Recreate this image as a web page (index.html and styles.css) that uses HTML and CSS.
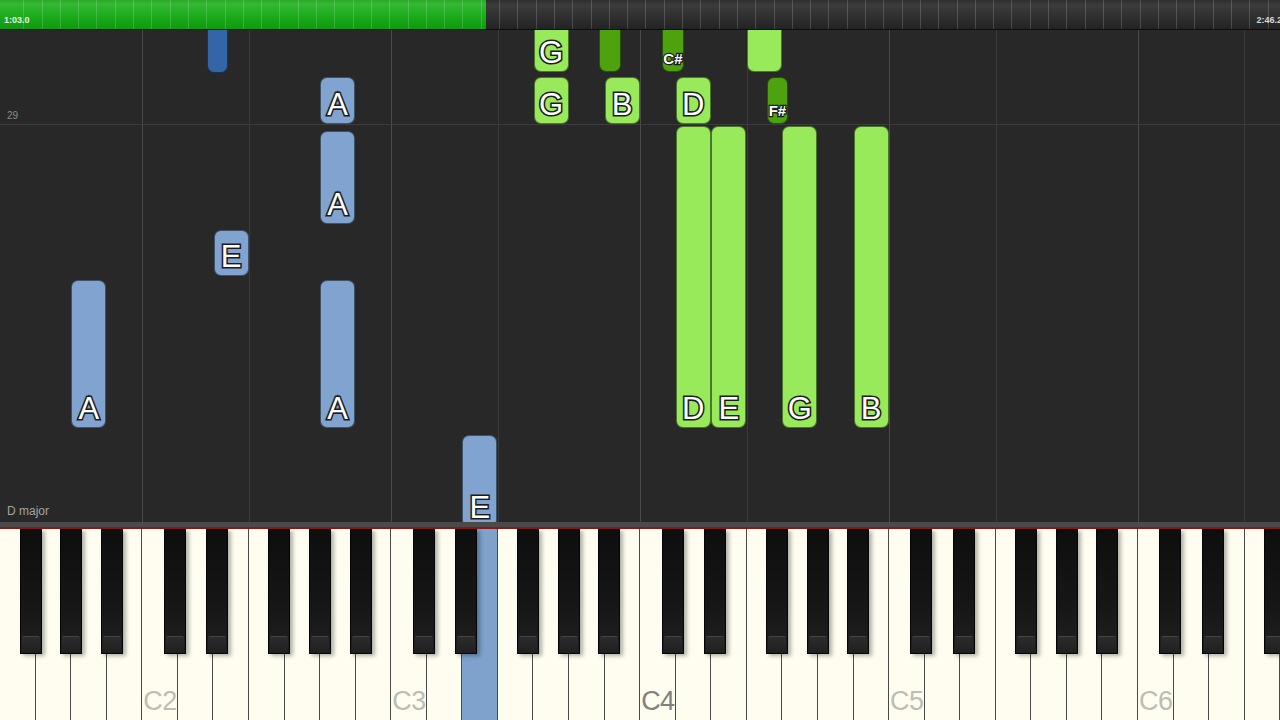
FILE: index.html
```html
<!DOCTYPE html>
<html lang="en">
<head>
<meta charset="utf-8">
<title>Piano roll</title>
<link rel="stylesheet" href="styles.css">
</head>
<body>
<div class="app">
  <div class="timebar">
    <div class="progress"><span class="time">1:03.0</span></div>
    <div class="remaining"><span class="time time-end">2:46.2</span></div>
  </div>

  <div class="roll">
    <div class="vline vline-c" style="left:142px"></div>
    <div class="vline vline-f" style="left:249px"></div>
    <div class="vline vline-c" style="left:391px"></div>
    <div class="vline vline-f" style="left:498px"></div>
    <div class="vline vline-c" style="left:640px"></div>
    <div class="vline vline-f" style="left:747px"></div>
    <div class="vline vline-c" style="left:889px"></div>
    <div class="vline vline-f" style="left:996px"></div>
    <div class="vline vline-c" style="left:1138px"></div>
    <div class="vline vline-f" style="left:1244px"></div>
    <div class="hline" style="top:94px"></div>
    <span class="measure" style="top:81px">29</span>

    <!-- left hand (blue) -->
    <div class="note note-lh-black" style="left:206.5px;top:-10px;height:52.5px"></div>
    <div class="note note-lh" style="left:320.2px;top:47px;height:47px"><span class="lbl">A</span></div>
    <div class="note note-lh" style="left:320.2px;top:101px;height:93px"><span class="lbl">A</span></div>
    <div class="note note-lh" style="left:213.5px;top:200px;height:46px"><span class="lbl">E</span></div>
    <div class="note note-lh" style="left:71.3px;top:250px;height:148px"><span class="lbl">A</span></div>
    <div class="note note-lh" style="left:320.2px;top:250px;height:148px"><span class="lbl">A</span></div>
    <div class="note note-lh" style="left:462.4px;top:405px;height:92px"><span class="lbl">E</span></div>

    <!-- right hand (green) -->
    <div class="note note-rh" style="left:533.5px;top:-10px;height:52px"><span class="lbl">G</span></div>
    <div class="note note-rh-black" style="left:599px;top:-10px;height:52px"></div>
    <div class="note note-rh-black" style="left:662.2px;top:-10px;height:52px"><span class="lbl lbl-small">C#</span></div>
    <div class="note note-rh" style="left:746.9px;top:-10px;height:52px"></div>
    <div class="note note-rh" style="left:533.5px;top:47px;height:47px"><span class="lbl">G</span></div>
    <div class="note note-rh" style="left:604.6px;top:47px;height:47px"><span class="lbl">B</span></div>
    <div class="note note-rh" style="left:675.8px;top:47px;height:47px"><span class="lbl">D</span></div>
    <div class="note note-rh-black" style="left:766.7px;top:47px;height:47px"><span class="lbl lbl-small">F#</span></div>
    <div class="note note-rh" style="left:675.8px;top:96px;height:302px"><span class="lbl">D</span></div>
    <div class="note note-rh" style="left:711.3px;top:96px;height:302px"><span class="lbl">E</span></div>
    <div class="note note-rh" style="left:782.4px;top:96px;height:302px"><span class="lbl">G</span></div>
    <div class="note note-rh" style="left:853.5px;top:96px;height:302px"><span class="lbl">B</span></div>

    <span class="key-name">D major</span>
  </div>

  <div class="rail"></div>

  <div class="keyboard">
    <div class="wk"></div>
    <div class="wk"></div>
    <div class="wk"></div>
    <div class="wk"></div>
    <div class="wk"><span class="oct">C2</span></div>
    <div class="wk"></div>
    <div class="wk"></div>
    <div class="wk"></div>
    <div class="wk"></div>
    <div class="wk"></div>
    <div class="wk"></div>
    <div class="wk"><span class="oct">C3</span></div>
    <div class="wk"></div>
    <div class="wk wk-lit"></div>
    <div class="wk"></div>
    <div class="wk"></div>
    <div class="wk"></div>
    <div class="wk"></div>
    <div class="wk"><span class="oct oct-mid">C4</span></div>
    <div class="wk"></div>
    <div class="wk"></div>
    <div class="wk"></div>
    <div class="wk"></div>
    <div class="wk"></div>
    <div class="wk"></div>
    <div class="wk"><span class="oct">C5</span></div>
    <div class="wk"></div>
    <div class="wk"></div>
    <div class="wk"></div>
    <div class="wk"></div>
    <div class="wk"></div>
    <div class="wk"></div>
    <div class="wk"><span class="oct">C6</span></div>
    <div class="wk"></div>
    <div class="wk"></div>
    <div class="wk"></div>

    <div class="bk" style="left:19.6px"></div>
    <div class="bk" style="left:60.1px"></div>
    <div class="bk" style="left:100.7px"></div>
    <div class="bk" style="left:163.8px"></div>
    <div class="bk" style="left:206.3px"></div>
    <div class="bk" style="left:268.4px"></div>
    <div class="bk" style="left:309px"></div>
    <div class="bk" style="left:349.6px"></div>
    <div class="bk" style="left:412.7px"></div>
    <div class="bk" style="left:455.2px"></div>
    <div class="bk" style="left:517.3px"></div>
    <div class="bk" style="left:557.9px"></div>
    <div class="bk" style="left:598.4px"></div>
    <div class="bk" style="left:661.6px"></div>
    <div class="bk" style="left:704.1px"></div>
    <div class="bk" style="left:766.2px"></div>
    <div class="bk" style="left:806.8px"></div>
    <div class="bk" style="left:847.3px"></div>
    <div class="bk" style="left:910.4px"></div>
    <div class="bk" style="left:953px"></div>
    <div class="bk" style="left:1015.1px"></div>
    <div class="bk" style="left:1055.7px"></div>
    <div class="bk" style="left:1096.2px"></div>
    <div class="bk" style="left:1159.3px"></div>
    <div class="bk" style="left:1201.9px"></div>
    <div class="bk" style="left:1264px"></div>
  </div>
</div>
</body>
</html>
```

FILE: styles.css
```css
* { box-sizing: border-box; }

html, body {
  margin: 0;
  padding: 0;
  width: 1280px;
  height: 720px;
  overflow: hidden;
  background: #282828;
  font-family: "Liberation Sans", Arial, sans-serif;
}

.app {
  display: flex;
  flex-direction: column;
  width: 1280px;
  height: 720px;
}

/* ---------- time bar ---------- */
.timebar {
  position: relative;
  display: flex;
  height: 30px;
  flex: none;
  border-bottom: 1px solid #0c0c0c;
}
.timebar::after {
  content: "";
  position: absolute;
  inset: 0 0 0 0;
  background: repeating-linear-gradient(to right,
    transparent 0 17.3px,
    rgba(255, 255, 255, 0.16) 17.3px 18.3px);
  background-position: 6px 0;
  pointer-events: none;
}
.progress {
  width: 486px;
  display: flex;
  align-items: flex-end;
  padding: 0 0 4px 4px;
  background: linear-gradient(to bottom, #2aa82a 0, #33b933 4px, #20ad20 14px, #0e9d0e 28px);
}
.remaining {
  flex: 1;
  display: flex;
  align-items: flex-end;
  justify-content: flex-end;
  padding: 0 0 4px 0;
  background: linear-gradient(to bottom, #2e2e2e 0, #3c3c3c 5px, #323232 14px, #242424 28px);
}
.time {
  position: relative;
  z-index: 1;
  font-size: 9px;
  font-weight: bold;
  color: #e8f0e8;
  line-height: 1;
}
.time-end {
  margin-right: -2px;
  color: #d8d8d8;
}

/* ---------- falling notes area ---------- */
.roll {
  position: relative;
  height: 492px;
  flex: none;
  overflow: hidden;
  background: #282828;
}
.vline {
  position: absolute;
  top: 0;
  bottom: 0;
  width: 1px;
}
.vline-c { background: #4b4b4b; }
.vline-f { background: #3a3a3a; }
.hline {
  position: absolute;
  left: 0;
  right: 0;
  height: 1px;
  background: #3d3d3d;
}
.measure {
  position: absolute;
  left: 7px;
  font-size: 10px;
  color: #8a8a8a;
  line-height: 1;
}
.key-name {
  position: absolute;
  left: 7px;
  bottom: 5px;
  font-size: 12px;
  color: #a4a4a4;
  line-height: 1;
}

.note {
  position: absolute;
  width: 35px;
  border-radius: 7px;
  border: 1px solid rgba(0, 0, 0, 0.5);
  display: flex;
  align-items: flex-end;
  justify-content: center;
  padding-bottom: 3px;
  overflow: visible;
}
.note-lh { background: #80a4cf; }
.note-lh-black { background: #3565a9; width: 21.5px; }
.note-rh { background: #99ea5b; }
.note-rh-black { background: #4da20e; width: 21.5px; padding-bottom: 5px; }

.lbl {
  font-size: 31px;
  line-height: 1;
  color: #ffffff;
  -webkit-text-stroke: 3.2px #1c1c1c;
  paint-order: stroke fill;
}
.lbl-small {
  font-size: 15px;
  font-weight: bold;
  -webkit-text-stroke: 2.5px #1c1c1c;
  white-space: nowrap;
}

/* ---------- rail above keyboard ---------- */
.rail {
  height: 7px;
  flex: none;
  background: linear-gradient(to bottom, #4a4a4a 0 5px, #861818 5px 7px);
}

/* ---------- keyboard ---------- */
.keyboard {
  position: relative;
  flex: 1;
  display: flex;
  overflow: hidden;
  background: #fefdf0;
}
.wk {
  flex: 1;
  display: flex;
  align-items: flex-end;
  padding: 0 0 5px 1px;
  background: #fefdf0;
  border-right: 1px solid #4a4a48;
}
.wk-lit { background: #7ea2cc; }
.oct {
  font-size: 27px;
  line-height: 1;
  color: #bdbdb6;
  letter-spacing: -0.5px;
}
.oct-mid { color: #808080; }

.bk {
  position: absolute;
  top: 0;
  width: 22px;
  height: 125px;
  background: linear-gradient(to bottom, #0e0e0e 0, #161616 60%, #202020 100%);
  border: 1px solid #050505;
  box-shadow: 3px 2px 4px rgba(0, 0, 0, 0.3);
}
.bk::after {
  content: "";
  position: absolute;
  left: 1px;
  right: 1px;
  bottom: 0;
  height: 17px;
  background: linear-gradient(to bottom, #444 0 1px, #2c2c2c 1px, #1f1f1f 100%);
  border-radius: 2px 2px 0 0;
}
```
